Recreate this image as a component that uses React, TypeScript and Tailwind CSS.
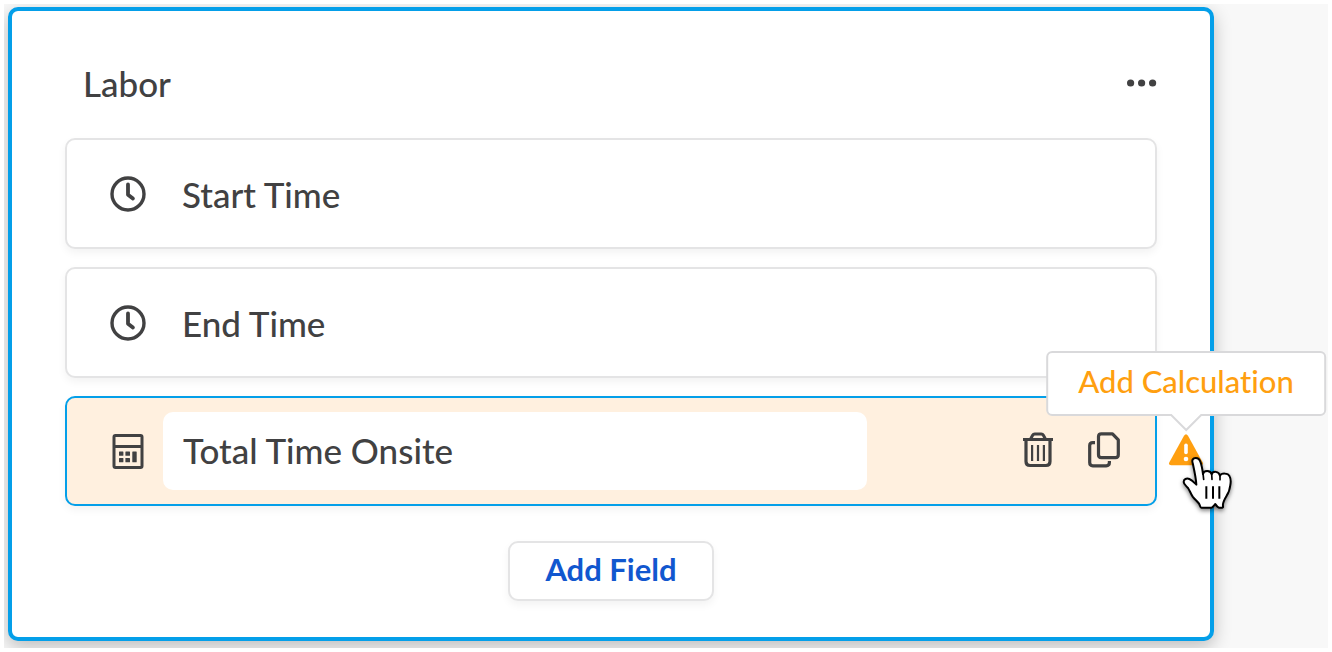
import { useState } from 'react';

const ClockIcon = () => (
  <svg viewBox="0 0 36 36" className="size-9 shrink-0" fill="none" stroke="currentColor" aria-hidden="true">
    <circle cx="18" cy="18" r="16" strokeWidth="3.4" />
    <path d="M18 8.5v10.2l4.9 3.9" strokeWidth="3.8" strokeLinecap="round" strokeLinejoin="round" />
  </svg>
);

const CalculatorIcon = () => (
  <svg viewBox="0 0 36 36" className="size-9 shrink-0" fill="none" stroke="currentColor" aria-hidden="true">
    <rect x="4" y="2.5" width="28" height="32" rx="1.5" strokeWidth="3" />
    <path d="M4 13.5h28" strokeWidth="3" />
    <g fill="currentColor" stroke="none">
      <rect x="9" y="18.5" width="4.4" height="4.2" rx=".5" />
      <rect x="15.4" y="18.5" width="4.6" height="4.2" rx=".5" />
      <rect x="9" y="25" width="4.4" height="4.2" rx=".5" />
      <rect x="15.4" y="25" width="4.6" height="4.2" rx=".5" />
      <rect x="22.3" y="18.5" width="4.4" height="10.7" rx=".5" />
    </g>
  </svg>
);

const TrashIcon = () => (
  <svg viewBox="0 0 32 36" className="h-9 w-8" fill="none" stroke="currentColor" aria-hidden="true">
    <path d="M1 7.5h30" strokeWidth="3" />
    <path d="M8.5 7.2 10.6 3.2Q11.3 2 12.7 2h6.6q1.4 0 2.1 1.2l2.1 4" strokeWidth="3" />
    <path d="M4 8v21.5q0 4 4 4h16q4 0 4-4V8" strokeWidth="3.2" />
    <path d="M10.1 13v16M16 13v16M21.9 13v16" strokeWidth="2.2" />
  </svg>
);

const CopyIcon = () => (
  <svg viewBox="0 0 32 36" className="h-9 w-8" fill="none" stroke="currentColor" strokeWidth="3.2" aria-hidden="true">
    <path d="M10.5 4.6q0-2.8 2.8-2.8h11.2l5.8 6v15q0 2.8-2.8 2.8H13.3q-2.8 0-2.8-2.8z" strokeLinejoin="round" />
    <path d="M7 10.6H4.8q-3.1 0-3.1 3v17q0 3.2 3.1 3.2h13.4q3.2 0 3.2-3.2V29" />
  </svg>
);

const WarningIcon = () => (
  <svg viewBox="0 0 36 32" className="h-8 w-9" aria-hidden="true">
    <path d="M16 1.8q2-3 4 0l14.6 26.4q1.4 3-1.8 3H3.2q-3.2 0-1.8-3z" fill="#ff9f10" />
    <path d="M18 11.2v7.2" stroke="#fff" strokeWidth="3.6" strokeLinecap="round" />
    <circle cx="18" cy="25" r="2.3" fill="#fff" />
  </svg>
);

const HandCursor = () => (
  <svg
    viewBox="0 0 165 174"
    className="pointer-events-none absolute top-[21px] left-3 h-[58px] w-[55px] drop-shadow-[0_2px_2px_rgba(0,0,0,0.5)]"
    aria-hidden="true"
  >
    <path
      d="M38 24C35 15 39 9 47 9c8 0 12 5 14 11 4 10 6 22 8 37 2-11 22-13 26 1 3-11 22-10 25 4 4-8 24-9 29 2 4 8 4 15 2 26-2 16-6 25-11 32-6 10-10 17-11 25-1 7 2 11-2 11h-9c-5 0-8-5-12-11-5 6-8 11-12 11H64c-4 0-3-6-7-12-5-7-13-13-19-21-6-9-9-19-14-26-5-6-13-11-13-18 0-9 9-12 17-9 8 3 14 10 21 17-1-20-6-42-11-65z"
      fill="#fff"
      stroke="#000"
      strokeWidth="6"
      strokeLinejoin="round"
    />
    <path d="M69 55l2 18M95 57l1 16M120 61v13" stroke="#000" strokeWidth="5" strokeLinecap="round" />
    <path d="M79 94v37M99 94v37M118 94v37" stroke="#000" strokeWidth="6" />
  </svg>
);

const TimeField = ({ label }: { label: string }) => (
  <li className="flex h-[111px] items-center gap-9 rounded-[10px] border-2 border-[#e4e4e5] bg-white px-[43px] shadow-[0_4px_8px_rgba(0,0,0,0.05)]">
    <ClockIcon />
    <span>{label}</span>
  </li>
);

export default function App() {
  const [name, setName] = useState('Total Time Onsite');

  return (
    <div className="bg-white p-1 font-['Lato',sans-serif] text-[#414142] [font-variant-ligatures:none]">
      <main className="overflow-hidden bg-[#f8f8f8] pt-[3px] pr-[114px] pb-[7px] pl-1">
        <section className="rounded-[10px] border-4 border-[#049fe9] bg-white px-[53px] pt-[52px] pb-9 text-[35px] leading-10 font-medium shadow-[0_6px_18px_rgba(0,0,0,0.24)]">
          <header className="mb-[35px] flex items-center justify-between pl-[18px]">
            <h2>Labor</h2>
            <button type="button" aria-label="More options">
              <svg viewBox="0 0 30 8" className="h-2 w-[30px]" fill="currentColor" aria-hidden="true">
                <circle cx="3.6" cy="4" r="3.6" />
                <circle cx="14.6" cy="4" r="3.6" />
                <circle cx="25.6" cy="4" r="3.6" />
              </svg>
            </button>
          </header>

          <ul className="flex flex-col gap-[18px]">
            <TimeField label="Start Time" />
            <TimeField label="End Time" />

            <li className="relative flex h-[110px] items-center rounded-[10px] border-2 border-[#049fe9] bg-[#fff0df] pr-[35px] pl-[43px] shadow-[0_4px_8px_rgba(0,0,0,0.05)]">
              <CalculatorIcon />
              <input
                type="text"
                aria-label="Field name"
                value={name}
                onChange={(e) => setName(e.target.value)}
                className="ml-[17px] h-[78px] min-w-0 flex-1 rounded-[10px] bg-white px-5 pb-0.5 outline-none"
              />
              <div className="ml-[155px] flex gap-[34px] pb-0.5">
                <button type="button" aria-label="Delete field">
                  <TrashIcon />
                </button>
                <button type="button" aria-label="Duplicate field">
                  <CopyIcon />
                </button>
              </div>

              {/* missing-formula warning, hangs off the right edge of the row */}
              <div className="absolute top-9 left-full ml-[13px] h-8 w-9">
                <WarningIcon />
                <div
                  role="tooltip"
                  className="absolute bottom-full left-1/2 mb-[18px] -translate-x-1/2 rounded-md border-2 border-[#d9d9db] bg-white px-[30px] pt-2 pb-[13px] text-[31px] whitespace-nowrap text-[#ff9f10]"
                >
                  Add Calculation
                  <svg viewBox="0 0 32 18" className="absolute top-full left-1/2 h-[18px] w-8 -translate-x-1/2" aria-hidden="true">
                    <path d="M0 0l16 16L32 0" fill="#fff" stroke="#d9d9db" strokeWidth="2" />
                  </svg>
                </div>
                <HandCursor />
              </div>
            </li>
          </ul>

          <button
            type="button"
            className="mx-auto mt-[35px] block h-[60px] rounded-[10px] border-2 border-[#e4e4e5] bg-white px-[35px] pb-1 text-[31px] font-bold text-[#1157cf] shadow-[0_4px_8px_rgba(0,0,0,0.05)]"
          >
            Add Field
          </button>
        </section>
      </main>
    </div>
  );
}
